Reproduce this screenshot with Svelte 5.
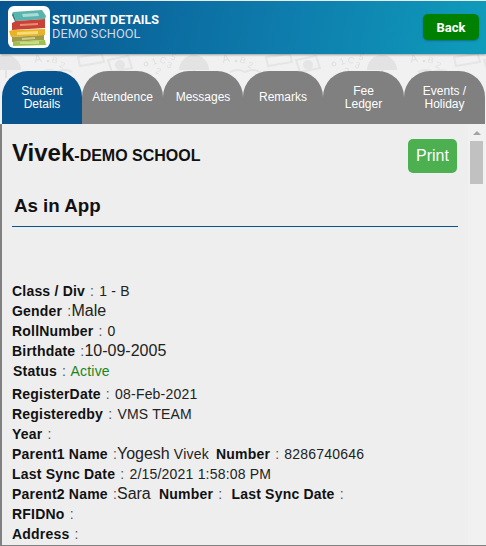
<script>
  const tabs = [
    { lines: ['Student', 'Details'], active: true },
    { lines: ['Attendence'] },
    { lines: ['Messages'] },
    { lines: ['Remarks'] },
    { lines: ['Fee', 'Ledger'] },
    { lines: ['Events /', 'Holiday'] }
  ];
</script>

<div class="page">
  <header class="topbar">
    <div class="logo" aria-hidden="true">
      <svg viewBox="0 0 42 42" width="42" height="42">
        <rect width="42" height="42" rx="6" fill="#fff" />
        <path d="M5 6 L34 4 L38 10 L37 13 L8 15 Z" fill="#57b5ae" />
        <path d="M5 6 L8 15 L8 18 L4 9 Z" fill="#2f7f7c" />
        <path d="M14 8 L30 7 L31 10 L15 11 Z" fill="#a9dcd5" />
        <path d="M4 17 L8 15 L37 13 L37 22 L4 24 Z" fill="#c8423a" />
        <path d="M12 18 L30 17 L30 19 L12 20 Z" fill="#e98d72" />
        <path d="M1 25 L5 24 L37 23 L37 29 L3 31 Z" fill="#e9b327" />
        <path d="M9 26 L30 25 L30 28 L9 29 Z" fill="#f5dc76" />
        <path d="M4 31 L36 29 L36 34 L4 36 Z" fill="#a39a45" />
        <path d="M14 32 L27 31 L27 33 L14 34 Z" fill="#d0cb85" />
        <path d="M5 36 L37 34 L38 39 L5 40 Z" fill="#9cc24c" />
        <path d="M12 36 L31 35 L31 38 L12 38 Z" fill="#c4de85" />
      </svg>
    </div>
    <div class="titles">
      <div class="title">STUDENT DETAILS</div>
      <div class="school">DEMO SCHOOL</div>
    </div>
    <button type="button" class="back">Back</button>
  </header>

  <div class="tabstrip">
    <svg class="pattern" width="486" height="70" viewBox="0 0 486 70" aria-hidden="true">
      <defs>
        <pattern id="doodles" x="0" y="0" width="188" height="70" patternUnits="userSpaceOnUse">
          <!-- umbrella, split so it wraps across the tile edge -->
          <path d="M-9 16 a15 15 0 0 1 30 0 Z" fill="#e3e3e3" />
          <path d="M179 16 a15 15 0 0 1 30 0 Z" fill="#e3e3e3" />
          <path d="M6 16 V24 M194 16 V24" stroke="#e3e3e3" stroke-width="2" />
          <g fill="none" stroke="#e5e5e5" stroke-width="2">
            <path d="M78 3 L102 0 L104 8 L80 12 Z" />
            <path d="M42 18 q8 -4 15 0 q8 -4 15 0" />
            <path d="M108 6 L128 2 L132 14 L112 18 Z" />
            <circle cx="120" cy="11" r="4" fill="#e5e5e5" />
          </g>
          <g fill="#dfdfdf" font-family="Liberation Sans, sans-serif" font-size="9">
            <text x="35" y="9" font-size="11" transform="rotate(-12 35 9)">A</text>
            <circle cx="48" cy="7" r="1.3" />
            <text x="51" y="8" transform="rotate(20 51 8)">B</text>
            <text x="59" y="13" transform="rotate(20 59 13)">2</text>
            <circle cx="146" cy="10" r="2" fill="none" stroke="#dfdfdf" />
            <text x="153" y="11" transform="rotate(-20 153 11)">1</text>
            <text x="159" y="8" transform="rotate(20 159 8)">C</text>
            <text x="166" y="13" transform="rotate(20 166 13)">3</text>
            <text x="155" y="19" transform="rotate(20 155 19)">2</text>
            <text x="170" y="5" transform="rotate(20 170 5)">5</text>
          </g>
        </pattern>
      </defs>
      <rect y="0" width="486" height="70" fill="url(#doodles)" />
    </svg>
    <nav class="tabs">
      {#each tabs as tab}
        <button type="button" class="tab" class:active={tab.active}>
          {#each tab.lines as line}
            <span>{line}</span>
          {/each}
        </button>
      {/each}
    </nav>
  </div>

  <main class="panel">
    <div class="content">
      <div class="headline">
        <h1><span class="name">Vivek</span><span class="org">-DEMO SCHOOL</span></h1>
        <button type="button" class="print">Print</button>
      </div>
      <h2>As in App</h2>
      <hr />

      <div class="details">
        <div class="row"><b>Class / Div</b> <i>:</i> 1 - B</div>
        <div class="row"><b>Gender</b> <i>:</i><span class="big">Male</span></div>
        <div class="row"><b>RollNumber</b> <i>:</i> 0</div>
        <div class="row"><b>Birthdate</b> <i>:</i><span class="big">10-09-2005</span></div>
        <div class="row status"><b>Status</b> <i>:</i> <span class="green">Active</span></div>
        <div class="row gap"><b>RegisterDate</b> <i>:</i> 08-Feb-2021</div>
        <div class="row"><b>Registeredby</b> <i>:</i> VMS TEAM</div>
        <div class="row"><b>Year</b> <i>:</i></div>
        <div class="row"><b>Parent1 Name</b> <i>:</i><span class="big">Yogesh</span> Vivek <b class="pushed">Number</b> <i>:</i> 8286740646</div>
        <div class="row"><b>Last Sync Date</b> <i>:</i> 2/15/2021 1:58:08 PM</div>
        <div class="row"><b>Parent2 Name</b> <i>:</i><span class="big">Sara</span> &nbsp;<b>Number</b> <i>:</i> &nbsp;<b>Last Sync Date</b> <i>:</i></div>
        <div class="row"><b>RFIDNo</b> <i>:</i></div>
        <div class="row"><b>Address</b> <i>:</i></div>
      </div>
    </div>

    <div class="scrollbar" aria-hidden="true">
      <span class="arrow"></span>
      <span class="thumb"></span>
    </div>
  </main>
</div>

<style>
  :global(body) {
    margin: 0;
    background: #f1f1f1;
  }

  .page {
    width: 486px;
    height: 546px;
    overflow: hidden;
    display: flex;
    flex-direction: column;
    font-family: "Liberation Sans", Arial, sans-serif;
    color: #111;
  }

  .topbar {
    height: 53px;
    flex: none;
    display: flex;
    align-items: center;
    padding: 0 7px 1px 8px;
    box-sizing: border-box;
    margin-top: 1px;
    background: linear-gradient(100deg, #08548f 0%, #0e7fae 62%, #0f9cbb 100%);
    box-shadow: 0 1px 2px rgba(0, 0, 0, 0.35);
    position: relative;
    z-index: 1;
  }

  .logo {
    width: 42px;
    height: 42px;
    margin-right: 2px;
  }

  .logo svg {
    display: block;
  }

  .titles {
    flex: 1;
    font-family: Roboto, "Liberation Sans", sans-serif;
    line-height: 14px;
  }

  .title {
    color: #fff;
    font-weight: 700;
    font-size: 12.5px;
  }

  .school {
    color: #cfd9e6;
    font-size: 12.8px;
  }

  .back {
    width: 56px;
    height: 26px;
    border: 0;
    border-radius: 5px;
    background: #008000;
    color: #fff;
    font-family: Roboto, "Liberation Sans", sans-serif;
    font-weight: 700;
    font-size: 13px;
    padding: 0;
    box-shadow: 0 1px 2px rgba(0, 0, 0, 0.25);
  }

  .tabstrip {
    height: 70px;
    flex: none;
    position: relative;
    display: flex;
    flex-direction: column;
    justify-content: flex-end;
    background: #f1f1f1;
  }

  .pattern {
    position: absolute;
    left: 0;
    top: 0;
  }

  .tabs {
    position: relative;
    display: grid;
    grid-template-columns: 80px 81px 80px 80px 81px 81px;
    height: 53px;
    margin-left: 2px;
  }

  .tab {
    display: flex;
    flex-direction: column;
    align-items: center;
    justify-content: center;
    border: 0;
    padding: 0;
    border-radius: 26px 26px 0 0;
    background: #808080;
    color: #fff;
    font-family: "Liberation Sans", Arial, sans-serif;
    font-size: 12px;
    line-height: 13px;
  }

  .tab.active {
    background: #08548f;
  }

  .panel {
    flex: 1;
    min-height: 0;
    display: flex;
    background: #eee;
    border-left: 2px solid #808080;
    border-bottom: 1px solid #808080;
  }

  .content {
    flex: 1;
    min-width: 0;
    padding: 12px 10px 0 10px;
  }

  .headline {
    display: flex;
    justify-content: space-between;
    align-items: flex-start;
    height: 59px;
  }

  h1 {
    margin: 0;
    line-height: 28px;
    font-weight: 700;
  }

  .name {
    font-size: 24px;
  }

  .org {
    font-size: 16px;
  }

  .print {
    width: 49px;
    height: 34px;
    border: 0;
    border-radius: 5px;
    background: #4cb050;
    color: #fff;
    font-family: "Liberation Sans", Arial, sans-serif;
    font-size: 16px;
    padding: 0;
    margin: 3px 1px 0 0;
  }

  h2 {
    margin: 0 0 0 2px;
    font-size: 18.72px;
    line-height: 22px;
    font-weight: 700;
  }

  hr {
    margin: 9px 0 0;
    border: 0;
    border-top: 1px solid #08548f;
  }

  .details {
    margin-top: 54px;
    font-size: 14px;
    letter-spacing: 0.2px;
    color: #222;
  }

  .row {
    height: 20px;
    line-height: 20px;
    white-space: nowrap;
  }

  .row b {
    font-size: 14px;
    color: #111;
  }

  .row b.pushed {
    margin-left: 3px;
  }

  .row i {
    font-style: normal;
    font-size: 14px;
    color: #555;
    margin: 0 1px;
  }

  .big {
    font-size: 16px;
    letter-spacing: 0;
    margin-left: -1px;
  }

  .status {
    padding-left: 1px;
  }

  .green {
    color: #1c841c;
  }

  .gap {
    margin-top: 3px;
  }

  .scrollbar {
    width: 17px;
    padding: 7px 1px 0 0;
    flex: none;
    background: #f1f1f1;
    display: flex;
    flex-direction: column;
    align-items: center;
  }

  .arrow {
    width: 0;
    height: 0;
    border-left: 4px solid transparent;
    border-right: 4px solid transparent;
    border-bottom: 4px solid #a3a3a3;
  }

  .thumb {
    width: 13px;
    height: 43px;
    margin-top: 6px;
    background: #c1c1c1;
  }
</style>
